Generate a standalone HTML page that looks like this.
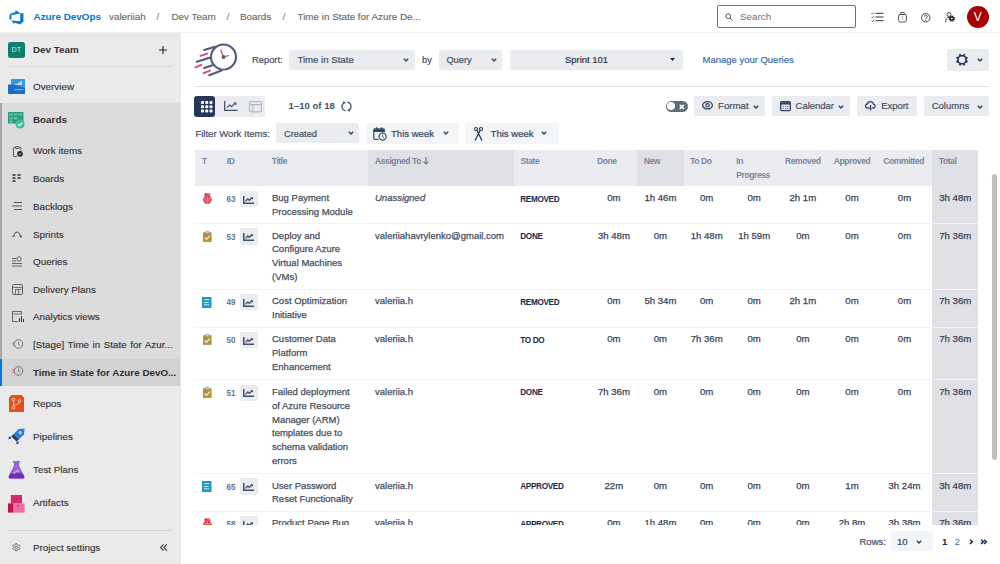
<!DOCTYPE html>
<html><head><meta charset="utf-8">
<style>
*{box-sizing:border-box;margin:0;padding:0}
html,body{width:1000px;height:564px;overflow:hidden;background:#fff;font-family:"Liberation Sans",sans-serif;color:#323130;position:relative}
.a{position:absolute}
.t{position:absolute;white-space:nowrap;line-height:14px}
svg{position:absolute;overflow:visible}
/* topbar */
#top{left:0;top:0;width:1000px;height:33px;background:#fff;border-bottom:1px solid #f0f0f0}
.crumb{font-size:9.85px;color:#6b6b6b;top:10px;-webkit-text-stroke-width:0.15px}
/* sidebar */
#side{left:0;top:33px;width:181px;height:531px;background:#eaeaea}
#boardsec{left:0;top:103px;width:180px;height:283px;background:#dcdcdc;border-left:2px solid #a8a8a8}
#sel{left:0;top:358.5px;width:180px;height:27.5px;background:#d2d2d2;border-left:2px solid #0078d4}
.nav{font-size:9.85px;color:#303030;left:33px;-webkit-text-stroke-width:0.12px}
.navb{font-weight:bold;-webkit-text-stroke-width:0}
/* main */
.btn{position:absolute;background:#ebecf0;border-radius:2px}
.lbl{font-size:9.6px;color:#444e62;-webkit-text-stroke-width:0.2px}
.th{font-size:8.6px;color:#7a869a;font-weight:bold;top:153.5px;letter-spacing:-0.45px}
.cell{font-size:9.5px;color:#454f62;line-height:13.9px;-webkit-text-stroke-width:0.25px}
.num{font-size:9.6px;color:#3b4457;text-align:center;width:46px;-webkit-text-stroke-width:0.25px}
.st{font-size:8.2px;font-weight:bold;color:#172b4d;left:520.3px;letter-spacing:-0.35px;margin-top:1.7px}
.hr{position:absolute;left:195px;width:783px;height:1px;background:#f4f5f7}
.idn{font-size:8.2px;font-weight:bold;color:#6b778c}
.cbtn{position:absolute;left:240px;width:17.6px;height:16.2px;background:#ebecf0;border-radius:2px}
</style></head><body>

<!-- TOP BAR -->
<div id="top" class="a"></div>
<svg style="left:9px;top:9.5px" width="15.3" height="14.5" viewBox="0 0 18 17">
 <path d="M17 3.5v10.2l-4.2 3.3-6.5-2.4v2.4L2.6 12.3l10.6.8V4.2zM13.5 4L7.6 0v2.4L2.1 4.1.5 6.1v4.6l2.3 1.1V5.8z" fill="#0078d4"/>
</svg>
<div class="t" style="left:33.5px;top:10px;font-size:9.9px;font-weight:bold;color:#0078d4">Azure DevOps</div>
<div class="t crumb" style="left:109px">valeriiah</div>
<div class="t crumb" style="left:156.5px;color:#8a8a8a">/</div>
<div class="t crumb" style="left:171.5px">Dev Team</div>
<div class="t crumb" style="left:226.5px;color:#8a8a8a">/</div>
<div class="t crumb" style="left:240px">Boards</div>
<div class="t crumb" style="left:282.5px;color:#8a8a8a">/</div>
<div class="t crumb" style="left:297.5px">Time in State for Azure De...</div>

<div class="a" style="left:716.5px;top:5px;width:139px;height:23px;border:1px solid #707070;border-radius:2px;background:#fff"></div>
<svg style="left:725px;top:12.5px" width="8" height="8" viewBox="0 0 8 8"><circle cx="3.2" cy="3.2" r="2.4" fill="none" stroke="#444" stroke-width="0.9"/><path d="M5 5L7.4 7.4" stroke="#444" stroke-width="1"/></svg>
<div class="t" style="left:740px;top:10px;font-size:9.85px;color:#707070">Search</div>

<svg style="left:871px;top:12px" width="12.5" height="10" viewBox="0 0 12.5 10"><path d="M0.5 1.3l0.9 0.9 1.6-1.7M0.5 5l0.9 0.9 1.6-1.7M0.5 8.7l0.9 0.9 1.6-1.7" fill="none" stroke="#333" stroke-width="0.8"/><path d="M4.5 1.3h8M4.5 5h8M4.5 8.7h8" stroke="#333" stroke-width="1"/></svg>
<svg style="left:897.5px;top:11.5px" width="9" height="10.5" viewBox="0 0 9 10.5"><path d="M2.8 0.5h3.4v2H2.8z" fill="none" stroke="#444" stroke-width="0.9"/><rect x="0.6" y="2.5" width="7.8" height="7.5" rx="1.5" fill="none" stroke="#444" stroke-width="0.9"/><path d="M4.5 4v4" stroke="#999" stroke-width="0.7"/></svg>
<svg style="left:921px;top:12.5px" width="9.5" height="9.5" viewBox="0 0 9.5 9.5"><circle cx="4.75" cy="4.75" r="4.2" fill="none" stroke="#333" stroke-width="0.9"/><path d="M3.4 3.6a1.4 1.4 0 1 1 1.9 1.3c-.4.2-.55.5-.55.9v.3" fill="none" stroke="#333" stroke-width="0.9"/><circle cx="4.75" cy="7.2" r="0.55" fill="#333"/></svg>
<svg style="left:944.5px;top:11.5px" width="11" height="11" viewBox="0 0 11 11"><circle cx="4" cy="2.5" r="2" fill="none" stroke="#333" stroke-width="0.9"/><path d="M0.6 10.3C0.6 7 2.2 5.4 4.2 5.4" fill="none" stroke="#333" stroke-width="0.9"/><path fill-rule="evenodd" d="M7.24 4.14 L7.51 3.38 L8.58 3.82 L8.23 4.55 L8.85 5.17 L9.58 4.82 L10.02 5.89 L9.26 6.16 L9.26 7.04 L10.02 7.31 L9.58 8.38 L8.85 8.03 L8.23 8.65 L8.58 9.38 L7.51 9.82 L7.24 9.06 L6.36 9.06 L6.09 9.82 L5.02 9.38 L5.37 8.65 L4.75 8.03 L4.02 8.38 L3.58 7.31 L4.34 7.04 L4.34 6.16 L3.58 5.89 L4.02 4.82 L4.75 5.17 L5.37 4.55 L5.02 3.82 L6.09 3.38 L6.36 4.14ZM7.70 6.60A0.9 0.9 0 1 0 5.90 6.60A0.9 0.9 0 1 0 7.70 6.60Z" fill="#222"/></svg>
<div class="a" style="left:966.8px;top:5.8px;width:22px;height:22px;border-radius:50%;background:#a80000"></div>
<div class="t" style="left:966.8px;top:9.5px;width:22px;text-align:center;font-size:12px;color:#fff">V</div>

<!-- SIDEBAR -->
<div id="side" class="a"></div>
<div id="boardsec" class="a"></div>
<div id="sel" class="a"></div>

<!-- DT -->
<div class="a" style="left:8px;top:42px;width:16.5px;height:16px;background:#0f806b;border-radius:2.5px"></div>
<div class="t" style="left:8px;top:43px;width:16.5px;text-align:center;font-size:7.2px;color:#cfe9e2">DT</div>
<div class="t nav navb" style="top:43px">Dev Team</div>
<svg style="left:159px;top:45.5px" width="8" height="8" viewBox="0 0 8 8"><path d="M4 0v8M0 4h8" stroke="#222" stroke-width="1.1"/></svg>
<div class="a" style="left:8px;top:66px;width:165px;height:1px;background:#dadada"></div>
<!-- Overview icon -->
<svg style="left:8px;top:79px" width="17" height="15" viewBox="0 0 17 15">
 <rect x="3" y="0" width="14" height="15" rx="0.8" fill="#3a96dd"/>
 <path d="M0 5.5h6L17 9v6H0.8a.8.8 0 0 1-.8-.8z" fill="#1e6ec8"/>
 <path d="M5.5 6l4-1.5 2-1.5 2.5-1.5V6z" fill="#a9dcf5"/>
 <path d="M6.5 10h9v1.2h-9z" fill="#6fb6ec"/>
 <path d="M3 13L5 11" stroke="#114d96" stroke-width="0.8"/>
</svg>
<div class="t nav" style="top:80px">Overview</div>
<!-- Boards icon -->
<svg style="left:8px;top:111.5px" width="17" height="17" viewBox="0 0 17 17">
 <rect x="0" y="0" width="15.5" height="11.5" rx="0.6" fill="#2a9d7c"/>
 <path d="M1.2 1.2h3.6v2.6H1.2zM5.8 1.2h3.6v2.6H5.8zM10.4 1.2h3.8v2.6h-3.8zM1.2 5h3.6v2.6H1.2zM5.8 5h3.6v2.6H5.8zM1.2 8.6h3.6v2.2H1.2z" fill="#56c0a2"/>
 <circle cx="12" cy="12" r="4.6" fill="#3fbf97"/>
 <path d="M9.8 12.1l1.6 1.6 2.9-3.1" fill="none" stroke="#fff" stroke-width="1.2"/>
</svg>
<div class="t nav navb" style="top:113px">Boards</div>
<!-- sub items -->
<svg style="left:12.5px;top:146px" width="10" height="11" viewBox="0 0 10 11"><path d="M2.6 1.5H1.2a.7.7 0 0 0-.7.7v7.6a.7.7 0 0 0 .7.7h2.6M6 1.5h1.2a.7.7 0 0 1 .7.7v2.3" fill="none" stroke="#444" stroke-width="0.9"/><rect x="2.6" y="0.5" width="3.4" height="2" rx="0.5" fill="none" stroke="#444" stroke-width="0.9"/><circle cx="7" cy="7.8" r="2.9" fill="#2a2a2a"/><path d="M5.8 7.8l.9.9 1.5-1.6" stroke="#fff" stroke-width="0.8" fill="none"/></svg>
<div class="t nav" style="top:144px">Work items</div>
<svg style="left:12px;top:173px" width="10" height="10" viewBox="0 0 10 10"><path d="M0.5 1h3v2h-3zM5.5 1h3v2h-3zM0.5 4h3v2h-3zM5.5 4h3v2h-3zM0.5 7h3v2h-3z" fill="#555"/></svg>
<div class="t nav" style="top:171.5px">Boards</div>
<svg style="left:12px;top:201px" width="10" height="10" viewBox="0 0 10 10"><path d="M2 1.5h8M0 5h10M2 8.5h8" stroke="#555" stroke-width="1"/></svg>
<div class="t nav" style="top:199.5px">Backlogs</div>
<svg style="left:12px;top:230px" width="10" height="8" viewBox="0 0 10 8"><path d="M0.3 6.3H2.2A2.9 4.2 0 0 1 8 6.3" fill="none" stroke="#444" stroke-width="1"/><circle cx="8.9" cy="6.6" r="1" fill="#444"/></svg>
<div class="t nav" style="top:227.5px">Sprints</div>
<svg style="left:12px;top:256px" width="11" height="11" viewBox="0 0 11 11"><path d="M0 2.5h4M0 5h4M0 7.5h10M0 10h10" stroke="#555" stroke-width="0.9"/><circle cx="7" cy="3" r="2.2" fill="none" stroke="#555" stroke-width="0.9"/></svg>
<div class="t nav" style="top:255px">Queries</div>
<svg style="left:12px;top:284px" width="11" height="11" viewBox="0 0 11 11"><rect x="0.5" y="0.5" width="10" height="10" rx="1.5" fill="none" stroke="#555" stroke-width="0.9"/><path d="M0.5 3.5h10M3.5 5.5h6M3.5 5.5v5M6.5 5.5v5" stroke="#555" stroke-width="0.8"/></svg>
<div class="t nav" style="top:282.5px">Delivery Plans</div>
<svg style="left:12px;top:311px" width="12" height="11" viewBox="0 0 12 11"><path d="M6 10.5H0.5V0.5h9v3" fill="none" stroke="#555" stroke-width="0.9"/><path d="M0.5 3h9" stroke="#555" stroke-width="0.8"/><path d="M7 7h1v4H7zM9 5h1v6H9zM11 8h1v3h-1z" fill="#333"/></svg>
<div class="t nav" style="top:310px">Analytics views</div>
<svg style="left:12px;top:339px" width="12" height="11" viewBox="0 0 12 11"><circle cx="6.5" cy="5" r="4.3" fill="none" stroke="#666" stroke-width="0.9"/><path d="M6.5 2.5v2.8l1.8 1" stroke="#666" stroke-width="0.8" fill="none"/><path d="M0 4h2.3M0.5 6.3h2" stroke="#d45a6e" stroke-width="0.9"/></svg>
<div class="t nav" style="top:338px;word-spacing:0.8px">[Stage] Time in State for Azur...</div>
<svg style="left:12px;top:366px" width="12" height="11" viewBox="0 0 12 11"><circle cx="6.5" cy="5" r="4.3" fill="none" stroke="#666" stroke-width="0.9"/><path d="M6.5 2.5v2.8l1.8 1" stroke="#666" stroke-width="0.8" fill="none"/><path d="M0 4h2.3M0.5 6.3h2" stroke="#d45a6e" stroke-width="0.9"/></svg>
<div class="t nav navb" style="top:365.5px">Time in State for Azure DevO...</div>
<!-- Repos -->
<svg style="left:8.5px;top:395px" width="15" height="17" viewBox="0 0 15 17">
 <path d="M0 2.5L2.5 0h10L15 2.5V17H0z" fill="#e4501b"/>
 <circle cx="4.5" cy="4.5" r="1.4" fill="none" stroke="#fbd3c3" stroke-width="0.9"/><circle cx="4.5" cy="12.5" r="1.4" fill="none" stroke="#fbd3c3" stroke-width="0.9"/><circle cx="10.5" cy="6" r="1.4" fill="none" stroke="#fbd3c3" stroke-width="0.9"/>
 <path d="M4.5 6v5M10.5 7.5c0 2-6 2-6 3.5" fill="none" stroke="#fbd3c3" stroke-width="0.9"/>
</svg>
<div class="t nav" style="top:396.5px">Repos</div>
<!-- Pipelines -->
<svg style="left:8px;top:427.5px" width="17" height="17" viewBox="0 0 17 17">
 <path d="M16.6 0.4L16 6.5 8.6 13.6 3.4 8.4 10.5 1z" fill="#2f7bd8"/>
 <path d="M3.4 8.4L0.8 8.8 0.4 11.2 2.8 11zM8.6 13.6l-.4 2.6 2.4-.4 0.2-2.4z" fill="#1d5fb8"/>
 <path d="M3.4 8.4l2.2-2.2 5.2 5.2-2.2 2.2z" fill="#3a4250"/>
 <circle cx="12.3" cy="4.7" r="1.6" fill="#a8d0f4"/>
 <path d="M3.6 12.2L1 16l3.8-2.6z" fill="#c6def5"/>
</svg>
<div class="t nav" style="top:430px">Pipelines</div>
<!-- Test plans -->
<svg style="left:8px;top:460.5px" width="17" height="18" viewBox="0 0 17 18">
 <path d="M5 0h7v1.4h-0.8v3.6L16.5 15.8 15.6 17.6H1.4L0.5 15.8 5.8 5V1.4H5z" fill="#9a62d9"/>
 <path d="M2.6 12.2h11.8L16.5 15.8 15.6 17.6H1.4L0.5 15.8z" fill="#6b30b8"/>
 <path d="M5.5 12.5l4.2-3.2 1.2 1.4" stroke="#e8a9d6" stroke-width="1.1" fill="none"/>
</svg>
<div class="t nav" style="top:463px">Test Plans</div>
<!-- Artifacts -->
<svg style="left:8px;top:494.5px" width="17" height="18" viewBox="0 0 17 18">
 <rect x="2.8" y="0" width="11.2" height="8.6" fill="#d42a6a"/>
 <rect x="0" y="8.4" width="5.6" height="9.2" fill="#b8174f"/>
 <rect x="5.6" y="8.4" width="11" height="9.2" fill="#ec6fa6"/>
 <rect x="9.5" y="10" width="1.6" height="1.6" fill="#c43a2a"/>
</svg>
<div class="t nav" style="top:496px">Artifacts</div>
<div class="a" style="left:8px;top:530px;width:165px;height:1px;background:#d6d6d6"></div>
<svg style="left:11.8px;top:543px" width="8.6" height="8.6" viewBox="0 0 11 11"><circle cx="5.5" cy="5.5" r="1.6" fill="none" stroke="#444" stroke-width="0.9"/><path d="M4.6 0.8h1.8l.3 1.4 1.2.6 1.3-.6 1 1.5-1 1v1.4l1 1-1 1.5-1.3-.6-1.2.6-.3 1.4H4.6l-.3-1.4-1.2-.6-1.3.6-1-1.5 1-1V4.7l-1-1 1-1.5 1.3.6 1.2-.6z" fill="none" stroke="#444" stroke-width="0.85"/></svg>
<div class="t nav" style="top:541px">Project settings</div>
<svg style="left:160px;top:544px" width="7.5" height="7" viewBox="0 0 7.5 7"><path d="M3.6 0.4L0.6 3.5 3.6 6.6M6.9 0.4L3.9 3.5 6.9 6.6" fill="none" stroke="#444" stroke-width="1.2"/></svg>

<!-- MAIN -->
<!-- logo -->
<svg style="left:193px;top:42px" width="46" height="36" viewBox="193 42 46 36">
 <g stroke="#4f5b7c" stroke-width="2.1" stroke-linecap="round" fill="none">
  <circle cx="223.5" cy="57" r="12.5"/>
  <path d="M204.2 49.9L215 46.8M196.8 61.8L210.5 57.6M204.2 68.1L212.5 65.3M209.3 75.2L221.5 70.6"/>
 </g>
 <path d="M214 62.5a10.5 10.5 0 0 0 12 5.5" stroke="#dcdee4" stroke-width="1" fill="none"/>
 <g stroke="#e2457d" stroke-width="1.9" stroke-linecap="round">
  <path d="M200.5 55.8L207.3 53.6M195.4 67.3L201.4 64.8M203.5 73.2L210 70.7"/>
 </g>
 <path d="M223.3 57L220.8 50M223.3 57L228.3 55.6" stroke="#e2457d" stroke-width="1.2" stroke-linecap="round"/>
 <circle cx="223.5" cy="57" r="1.9" fill="#4f5b7c"/>
</svg>
<div class="t lbl" style="left:252px;top:52.5px;font-size:9.35px">Report:</div>
<div class="btn" style="left:289.4px;top:49.5px;width:125.2px;height:20.5px"></div>
<div class="t lbl" style="left:297.4px;top:52.5px;font-size:9.65px">Time in State</div>
<svg style="left:402.5px;top:57.5px" width="6" height="4" viewBox="0 0 6 4"><path d="M0.8 0.8L3 3 5.2 0.8" fill="none" stroke="#344563" stroke-width="1.5"/></svg>
<div class="t lbl" style="left:422px;top:52.5px;font-size:9.35px">by</div>
<div class="btn" style="left:439px;top:49.5px;width:63.4px;height:20.5px"></div>
<div class="t lbl" style="left:446.4px;top:52.5px;font-size:9.3px">Query</div>
<svg style="left:490.5px;top:57.5px" width="6" height="4" viewBox="0 0 6 4"><path d="M0.8 0.8L3 3 5.2 0.8" fill="none" stroke="#344563" stroke-width="1.5"/></svg>
<div class="btn" style="left:509.6px;top:49.5px;width:173.4px;height:20.5px"></div>
<div class="t lbl" style="left:565px;top:52.5px;font-size:9.45px;color:#2b3240">Sprint 101</div>
<svg style="left:670.3px;top:58.3px" width="5" height="3" viewBox="0 0 5 3"><path d="M0 0h5L2.5 3z" fill="#172b4d"/></svg>
<div class="t lbl" style="left:702.6px;top:52.5px;font-size:9.47px;color:#3d6cb0">Manage your Queries</div>
<div class="btn" style="left:947.2px;top:49px;width:41.6px;height:21.5px"></div>
<svg style="left:0;top:0" width="1000" height="80" viewBox="0 0 1000 80"><path fill-rule="evenodd" d="M962.92 54.89 L963.38 53.76 L965.23 54.52 L964.75 55.65 L966.05 56.95 L967.18 56.47 L967.94 58.32 L966.81 58.78 L966.81 60.62 L967.94 61.08 L967.18 62.93 L966.05 62.45 L964.75 63.75 L965.23 64.88 L963.38 65.64 L962.92 64.51 L961.08 64.51 L960.62 65.64 L958.77 64.88 L959.25 63.75 L957.95 62.45 L956.82 62.93 L956.06 61.08 L957.19 60.62 L957.19 58.78 L956.06 58.32 L956.82 56.47 L957.95 56.95 L959.25 55.65 L958.77 54.52 L960.62 53.76 L961.08 54.89ZM965.20 59.70A3.2 3.2 0 1 0 958.80 59.70A3.2 3.2 0 1 0 965.20 59.70Z" fill="#253858"/></svg>
<svg style="left:977.2px;top:58.3px" width="6" height="4" viewBox="0 0 6 4"><path d="M0.8 0.8L3 3 5.2 0.8" fill="none" stroke="#344563" stroke-width="1.5"/></svg>
<div class="a" style="left:195px;top:86px;width:794px;height:1px;background:#dfe1e6"></div>

<!-- toolbar -->
<div class="a" style="left:194.3px;top:96px;width:70.5px;height:20.7px;background:#ebecf0;border-radius:3px"></div>
<div class="a" style="left:194.3px;top:96px;width:21px;height:20.7px;background:#253858;border-radius:3px"></div>
<svg style="left:201px;top:100.5px" width="11.5" height="11.5" viewBox="0 0 11.5 11.5"><rect x="0" y="0" width="3" height="3" rx="0.9" fill="#fff"/><rect x="4.25" y="0" width="3" height="3" rx="0.9" fill="#fff"/><rect x="8.5" y="0" width="3" height="3" rx="0.9" fill="#fff"/><rect x="0" y="4.25" width="3" height="3" rx="0.9" fill="#fff"/><rect x="4.25" y="4.25" width="3" height="3" rx="0.9" fill="#fff"/><rect x="8.5" y="4.25" width="3" height="3" rx="0.9" fill="#fff"/><rect x="0" y="8.5" width="3" height="3" rx="0.9" fill="#fff"/><rect x="4.25" y="8.5" width="3" height="3" rx="0.9" fill="#fff"/><rect x="8.5" y="8.5" width="3" height="3" rx="0.9" fill="#fff"/></svg>
<svg style="left:224px;top:101px" width="14" height="10" viewBox="0 0 14 10"><path d="M0.7 0v9.3H13.6" fill="none" stroke="#42526e" stroke-width="1.3"/><path d="M3 6.6l2.6-2.6 1.9 1.6 3.2-3.2" fill="none" stroke="#42526e" stroke-width="1.2"/><path d="M9.2 1.6h3.2v3.2z" fill="#42526e"/></svg>
<svg style="left:248.7px;top:101px" width="13" height="11.5" viewBox="0 0 13 11.5"><rect x="0.6" y="0.6" width="11.8" height="10.3" rx="1" fill="none" stroke="#b3bac5" stroke-width="1.2"/><path d="M0.6 3.6h11.8M4 3.6v7.3" stroke="#b3bac5" stroke-width="1.2"/></svg>
<div class="t" style="left:288.6px;top:99px;font-size:9.57px;font-weight:bold;color:#42526e">1–10 of 18</div>
<svg style="left:340.5px;top:100.5px" width="11" height="11" viewBox="0 0 11 11"><path d="M3.2 1.8A4.3 4.3 0 0 0 4.5 9.8M7.8 9.2A4.3 4.3 0 0 0 6.5 1.2" fill="none" stroke="#42526e" stroke-width="1.2"/><path d="M2 0.2l2.8 1.2L2.4 3.6zM9 10.8L6.2 9.6 8.6 7.4z" fill="#42526e"/></svg>

<!-- toggle -->
<div class="a" style="left:665.6px;top:101px;width:22.4px;height:10.6px;background:#606b7e;border-radius:6px"></div>
<div class="a" style="left:667px;top:102.4px;width:7.8px;height:7.8px;background:#fff;border-radius:50%"></div>
<svg style="left:679px;top:103.6px" width="5.6" height="5.6" viewBox="0 0 5.6 5.6"><path d="M0.7 0.7l4.2 4.2M4.9 0.7L0.7 4.9" stroke="#fff" stroke-width="1.5"/></svg>

<div class="btn" style="left:694px;top:96px;width:70.6px;height:20px"></div>
<svg style="left:701.9px;top:101.3px" width="11" height="8.6" viewBox="0 0 11 8.6"><ellipse cx="5.5" cy="4.3" rx="4.85" ry="3.65" fill="none" stroke="#344563" stroke-width="1.3"/><circle cx="5.5" cy="4.3" r="1.7" fill="none" stroke="#344563" stroke-width="1.2"/></svg>
<div class="t lbl" style="left:718px;top:99px;font-size:9.66px">Format</div>
<svg style="left:752.5px;top:104.5px" width="6" height="4" viewBox="0 0 6 4"><path d="M0.8 0.8L3 3 5.2 0.8" fill="none" stroke="#344563" stroke-width="1.5"/></svg>

<div class="btn" style="left:771.6px;top:96px;width:78px;height:20px"></div>
<svg style="left:780px;top:100.6px" width="11" height="10.2" viewBox="0 0 11 10.2"><rect x="0.65" y="0.65" width="9.7" height="8.9" rx="1" fill="none" stroke="#344563" stroke-width="1.3"/><path d="M0.65 1.2h9.7v2.4H0.65z" fill="#344563"/><path d="M2.6 5h1.3v1.1H2.6zM4.85 5h1.3v1.1H4.85zM7.1 5h1.3v1.1H7.1zM2.6 7h1.3v1.1H2.6zM4.85 7h1.3v1.1H4.85zM7.1 7h1.3v1.1H7.1z" fill="#6b778c"/></svg>
<div class="t lbl" style="left:795.6px;top:99px;font-size:9.46px">Calendar</div>
<svg style="left:838px;top:104.5px" width="6" height="4" viewBox="0 0 6 4"><path d="M0.8 0.8L3 3 5.2 0.8" fill="none" stroke="#344563" stroke-width="1.5"/></svg>

<div class="btn" style="left:857.2px;top:96px;width:59.5px;height:20.3px"></div>
<svg style="left:865.3px;top:100.6px" width="11" height="9.5" viewBox="0 0 11 9.5"><path d="M3.8 7H2.6A2 2 0 0 1 2.3 3 3.2 3.2 0 0 1 8.5 3.1 2 2 0 0 1 8.6 7H7.2" fill="none" stroke="#344563" stroke-width="1.3"/><path d="M5.5 4v5.2" stroke="#344563" stroke-width="1.4"/><path d="M4.2 7.6l1.3 1.6 1.3-1.6z" fill="#344563"/></svg>
<div class="t lbl" style="left:881.2px;top:99px;font-size:9.45px">Export</div>

<div class="btn" style="left:924.2px;top:96px;width:65.2px;height:20.3px"></div>
<div class="t lbl" style="left:931.7px;top:99px;font-size:9.5px">Columns</div>
<svg style="left:977.3px;top:104.5px" width="6" height="4" viewBox="0 0 6 4"><path d="M0.8 0.8L3 3 5.2 0.8" fill="none" stroke="#344563" stroke-width="1.5"/></svg>

<!-- filter row -->
<div class="t lbl" style="left:195.4px;top:126.5px;font-size:9.56px">Filter Work Items:</div>
<div class="btn" style="left:276.4px;top:123.4px;width:83.1px;height:19.8px"></div>
<div class="t lbl" style="left:284px;top:126.5px;font-size:9.28px">Created</div>
<svg style="left:347.5px;top:131px" width="6" height="4" viewBox="0 0 6 4"><path d="M0.8 0.8L3 3 5.2 0.8" fill="none" stroke="#344563" stroke-width="1.5"/></svg>
<div class="btn" style="left:366.3px;top:123.2px;width:92.4px;height:20.4px;background:#f4f5f7"></div>
<svg style="left:373px;top:127px" width="14" height="14" viewBox="0 0 14 14"><path d="M5.5 12.3H1.8a1 1 0 0 1-1-1V3a1 1 0 0 1 1-1h8.6a1 1 0 0 1 1 1v2.3" fill="none" stroke="#42526e" stroke-width="1.3"/><path d="M0.8 2.2h10.6v2.8H0.8z" fill="#344563"/><path d="M3.5 0.2v3M8.7 0.2v3" stroke="#344563" stroke-width="1.3"/><circle cx="9.6" cy="9.6" r="3.5" fill="#f4f5f7" stroke="#42526e" stroke-width="1.3"/><path d="M9.6 7.8v2l1.3 0.9" fill="none" stroke="#42526e" stroke-width="1"/></svg>
<div class="t lbl" style="left:391px;top:126.5px;font-size:9.55px;color:#344563">This week</div>
<svg style="left:442.5px;top:131px" width="6" height="4" viewBox="0 0 6 4"><path d="M0.8 0.8L3 3 5.2 0.8" fill="none" stroke="#344563" stroke-width="1.5"/></svg>
<div class="btn" style="left:465.4px;top:123.2px;width:93.6px;height:20.4px;background:#f4f5f7"></div>
<svg style="left:474px;top:126.5px" width="9" height="14" viewBox="0 0 9 14"><circle cx="2" cy="2" r="1.5" fill="none" stroke="#253858" stroke-width="1.1"/><circle cx="7" cy="2" r="1.5" fill="none" stroke="#253858" stroke-width="1.1"/><path d="M2.8 3.2L8 13.5M6.2 3.2L1 13.5" stroke="#253858" stroke-width="1.3"/></svg>
<div class="t lbl" style="left:490.6px;top:126.5px;font-size:9.55px;color:#344563">This week</div>
<svg style="left:541.2px;top:131px" width="6" height="4" viewBox="0 0 6 4"><path d="M0.8 0.8L3 3 5.2 0.8" fill="none" stroke="#344563" stroke-width="1.5"/></svg>

<!-- table -->
<div id="tbl" class="a" style="left:0;top:0;width:1000px;height:524.5px;overflow:hidden">
<div class="a" style="left:195px;top:150px;width:783.3px;height:36.2px;background:#ebecf0"></div>
<div class="a" style="left:368px;top:150px;width:146px;height:36.2px;background:#dfe1e6"></div>
<div class="a" style="left:637.25px;top:150px;width:46.25px;height:36.2px;background:#dfe1e6"></div>
<div class="a" style="left:932.25px;top:150px;width:46px;height:380px;background:#dfe1e6"></div>
<div class="t th" style="left:201.75px">T</div>
<div class="t th" style="left:226.75px">ID</div>
<div class="t th" style="left:271.75px">Title</div>
<div class="t th" style="left:375px">Assigned To</div>
<svg style="left:423px;top:156.5px" width="6" height="8" viewBox="0 0 6 8"><path d="M3 0v7M0.6 4.6L3 7 5.4 4.6" fill="none" stroke="#6b778c" stroke-width="1.2"/></svg>
<div class="t th" style="left:520.5px">State</div>
<div class="t th" style="left:597px">Done</div>
<div class="t th" style="left:643.75px">New</div>
<div class="t th" style="left:690px">To Do</div>
<div class="t th" style="left:736.25px">In<br>Progress</div>
<div class="t th" style="left:785px">Removed</div>
<div class="t th" style="left:833.75px">Approved</div>
<div class="t th" style="left:883.25px">Committed</div>
<div class="t th" style="left:938.75px">Total</div>
<svg style="left:202.7px;top:192.8px" width="8.8" height="11" viewBox="0 0 8.8 11"><path d="M1.4 0.3h6v3.2h-6z" fill="#e0506a"/><circle cx="2.6" cy="1.4" r="0.7" fill="#555"/><circle cx="6.2" cy="1.4" r="0.7" fill="#f28ab8"/><ellipse cx="4.4" cy="6.8" rx="4.4" ry="4.1" fill="#dd3f3a"/><path d="M4.4 3v7.8M0.6 5.6h7.6M0.8 8.2h7.2" stroke="#f27bb6" stroke-width="0.9"/><circle cx="2.2" cy="6.9" r="0.6" fill="#f6a0c8"/><circle cx="6.6" cy="6.9" r="0.6" fill="#f6a0c8"/></svg>
<div class="t idn" style="left:226.5px;top:193.30px">63</div>
<div class="cbtn" style="top:191.2px"></div>
<svg style="left:243.2px;top:195.8px" width="11" height="8" viewBox="0 0 11 8"><path d="M0.75 0v7.25H11" fill="none" stroke="#42526e" stroke-width="1.5"/><path d="M2.6 5.4l2.2-2.4 1.6 1.4 2.6-2.6" fill="none" stroke="#42526e" stroke-width="1.4"/><path d="M7.4 1.2h2.6v2.6z" fill="#42526e"/></svg>
<div class="t cell" style="left:272px;top:191.30px">Bug Payment<br>Processing Module</div>
<div class="t cell" style="left:375px;top:191.30px;font-style:italic">Unassigned</div>
<div class="t st" style="top:191.30px">REMOVED</div>
<div class="t num" style="left:590.50px;width:46.75px;top:191.30px">0m</div>
<div class="t num" style="left:637.25px;width:46.25px;top:191.30px">1h 46m</div>
<div class="t num" style="left:683.50px;width:46.25px;top:191.30px">0m</div>
<div class="t num" style="left:729.75px;width:48.75px;top:191.30px">0m</div>
<div class="t num" style="left:778.50px;width:48.75px;top:191.30px">2h 1m</div>
<div class="t num" style="left:827.25px;width:49.50px;top:191.30px">0m</div>
<div class="t num" style="left:876.75px;width:55.50px;top:191.30px">0m</div>
<div class="t num" style="left:932.25px;width:46.00px;top:191.30px">3h 48m</div>
<div class="hr" style="top:222.9px"></div>
<svg style="left:202.8px;top:230.8px" width="8.6" height="11" viewBox="0 0 8.6 11"><rect x="0" y="1.2" width="8.6" height="9.8" rx="0.8" fill="#b5952a"/><path d="M0.4 1.6h7.8M0.4 10.6h7.8" stroke="#9aa3b5" stroke-width="0.7"/><rect x="2.6" y="0" width="3.4" height="2.4" rx="0.6" fill="#c9cfdc" stroke="#8e97a8" stroke-width="0.5"/><path d="M1.6 6.4l1.9 1.9 3.4-3.7" fill="none" stroke="#f4f0ea" stroke-width="1.2"/><path d="M2 3.8v2M3.8 3.8v1.4" stroke="#7d8698" stroke-width="0.6"/></svg>
<div class="t idn" style="left:226.5px;top:230.50px">53</div>
<div class="cbtn" style="top:228.4px"></div>
<svg style="left:243.2px;top:233.0px" width="11" height="8" viewBox="0 0 11 8"><path d="M0.75 0v7.25H11" fill="none" stroke="#42526e" stroke-width="1.5"/><path d="M2.6 5.4l2.2-2.4 1.6 1.4 2.6-2.6" fill="none" stroke="#42526e" stroke-width="1.4"/><path d="M7.4 1.2h2.6v2.6z" fill="#42526e"/></svg>
<div class="t cell" style="left:272px;top:228.50px">Deploy and<br>Configure Azure<br>Virtual Machines<br>(VMs)</div>
<div class="t cell" style="left:375px;top:228.50px">valeriiahavrylenko@gmail.com</div>
<div class="t st" style="top:228.50px">DONE</div>
<div class="t num" style="left:590.50px;width:46.75px;top:228.50px">3h 48m</div>
<div class="t num" style="left:637.25px;width:46.25px;top:228.50px">0m</div>
<div class="t num" style="left:683.50px;width:46.25px;top:228.50px">1h 48m</div>
<div class="t num" style="left:729.75px;width:48.75px;top:228.50px">1h 59m</div>
<div class="t num" style="left:778.50px;width:48.75px;top:228.50px">0m</div>
<div class="t num" style="left:827.25px;width:49.50px;top:228.50px">0m</div>
<div class="t num" style="left:876.75px;width:55.50px;top:228.50px">0m</div>
<div class="t num" style="left:932.25px;width:46.00px;top:228.50px">7h 36m</div>
<div class="hr" style="top:288.6px"></div>
<svg style="left:202.1px;top:297.0px" width="9.5" height="11" viewBox="0 0 9.5 11"><rect x="0" y="0" width="9.5" height="11" fill="#1a9bc7"/><path d="M2 2.7h5.2M2 5.5h4.6M2 7.8h5.2" stroke="#c9ecf6" stroke-width="1"/></svg>
<div class="t idn" style="left:226.5px;top:296.20px">49</div>
<div class="cbtn" style="top:294.1px"></div>
<svg style="left:243.2px;top:298.7px" width="11" height="8" viewBox="0 0 11 8"><path d="M0.75 0v7.25H11" fill="none" stroke="#42526e" stroke-width="1.5"/><path d="M2.6 5.4l2.2-2.4 1.6 1.4 2.6-2.6" fill="none" stroke="#42526e" stroke-width="1.4"/><path d="M7.4 1.2h2.6v2.6z" fill="#42526e"/></svg>
<div class="t cell" style="left:272px;top:294.20px">Cost Optimization<br>Initiative</div>
<div class="t cell" style="left:375px;top:294.20px">valeriia.h</div>
<div class="t st" style="top:294.20px">REMOVED</div>
<div class="t num" style="left:590.50px;width:46.75px;top:294.20px">0m</div>
<div class="t num" style="left:637.25px;width:46.25px;top:294.20px">5h 34m</div>
<div class="t num" style="left:683.50px;width:46.25px;top:294.20px">0m</div>
<div class="t num" style="left:729.75px;width:48.75px;top:294.20px">0m</div>
<div class="t num" style="left:778.50px;width:48.75px;top:294.20px">2h 1m</div>
<div class="t num" style="left:827.25px;width:49.50px;top:294.20px">0m</div>
<div class="t num" style="left:876.75px;width:55.50px;top:294.20px">0m</div>
<div class="t num" style="left:932.25px;width:46.00px;top:294.20px">7h 36m</div>
<div class="hr" style="top:326.5px"></div>
<svg style="left:202.8px;top:334.4px" width="8.6" height="11" viewBox="0 0 8.6 11"><rect x="0" y="1.2" width="8.6" height="9.8" rx="0.8" fill="#b5952a"/><path d="M0.4 1.6h7.8M0.4 10.6h7.8" stroke="#9aa3b5" stroke-width="0.7"/><rect x="2.6" y="0" width="3.4" height="2.4" rx="0.6" fill="#c9cfdc" stroke="#8e97a8" stroke-width="0.5"/><path d="M1.6 6.4l1.9 1.9 3.4-3.7" fill="none" stroke="#f4f0ea" stroke-width="1.2"/><path d="M2 3.8v2M3.8 3.8v1.4" stroke="#7d8698" stroke-width="0.6"/></svg>
<div class="t idn" style="left:226.5px;top:334.10px">50</div>
<div class="cbtn" style="top:332.0px"></div>
<svg style="left:243.2px;top:336.6px" width="11" height="8" viewBox="0 0 11 8"><path d="M0.75 0v7.25H11" fill="none" stroke="#42526e" stroke-width="1.5"/><path d="M2.6 5.4l2.2-2.4 1.6 1.4 2.6-2.6" fill="none" stroke="#42526e" stroke-width="1.4"/><path d="M7.4 1.2h2.6v2.6z" fill="#42526e"/></svg>
<div class="t cell" style="left:272px;top:332.10px">Customer Data<br>Platform<br>Enhancement</div>
<div class="t cell" style="left:375px;top:332.10px">valeriia.h</div>
<div class="t st" style="top:332.10px">TO DO</div>
<div class="t num" style="left:590.50px;width:46.75px;top:332.10px">0m</div>
<div class="t num" style="left:637.25px;width:46.25px;top:332.10px">0m</div>
<div class="t num" style="left:683.50px;width:46.25px;top:332.10px">7h 36m</div>
<div class="t num" style="left:729.75px;width:48.75px;top:332.10px">0m</div>
<div class="t num" style="left:778.50px;width:48.75px;top:332.10px">0m</div>
<div class="t num" style="left:827.25px;width:49.50px;top:332.10px">0m</div>
<div class="t num" style="left:876.75px;width:55.50px;top:332.10px">0m</div>
<div class="t num" style="left:932.25px;width:46.00px;top:332.10px">7h 36m</div>
<div class="hr" style="top:379.1px"></div>
<svg style="left:202.8px;top:387.0px" width="8.6" height="11" viewBox="0 0 8.6 11"><rect x="0" y="1.2" width="8.6" height="9.8" rx="0.8" fill="#b5952a"/><path d="M0.4 1.6h7.8M0.4 10.6h7.8" stroke="#9aa3b5" stroke-width="0.7"/><rect x="2.6" y="0" width="3.4" height="2.4" rx="0.6" fill="#c9cfdc" stroke="#8e97a8" stroke-width="0.5"/><path d="M1.6 6.4l1.9 1.9 3.4-3.7" fill="none" stroke="#f4f0ea" stroke-width="1.2"/><path d="M2 3.8v2M3.8 3.8v1.4" stroke="#7d8698" stroke-width="0.6"/></svg>
<div class="t idn" style="left:226.5px;top:386.70px">51</div>
<div class="cbtn" style="top:384.6px"></div>
<svg style="left:243.2px;top:389.2px" width="11" height="8" viewBox="0 0 11 8"><path d="M0.75 0v7.25H11" fill="none" stroke="#42526e" stroke-width="1.5"/><path d="M2.6 5.4l2.2-2.4 1.6 1.4 2.6-2.6" fill="none" stroke="#42526e" stroke-width="1.4"/><path d="M7.4 1.2h2.6v2.6z" fill="#42526e"/></svg>
<div class="t cell" style="left:272px;top:384.70px">Failed deployment<br>of Azure Resource<br>Manager (ARM)<br>templates due to<br>schema validation<br>errors</div>
<div class="t cell" style="left:375px;top:384.70px">valeriia.h</div>
<div class="t st" style="top:384.70px">DONE</div>
<div class="t num" style="left:590.50px;width:46.75px;top:384.70px">7h 36m</div>
<div class="t num" style="left:637.25px;width:46.25px;top:384.70px">0m</div>
<div class="t num" style="left:683.50px;width:46.25px;top:384.70px">0m</div>
<div class="t num" style="left:729.75px;width:48.75px;top:384.70px">0m</div>
<div class="t num" style="left:778.50px;width:48.75px;top:384.70px">0m</div>
<div class="t num" style="left:827.25px;width:49.50px;top:384.70px">0m</div>
<div class="t num" style="left:876.75px;width:55.50px;top:384.70px">0m</div>
<div class="t num" style="left:932.25px;width:46.00px;top:384.70px">7h 36m</div>
<div class="hr" style="top:472.9px"></div>
<svg style="left:202.1px;top:481.3px" width="9.5" height="11" viewBox="0 0 9.5 11"><rect x="0" y="0" width="9.5" height="11" fill="#1a9bc7"/><path d="M2 2.7h5.2M2 5.5h4.6M2 7.8h5.2" stroke="#c9ecf6" stroke-width="1"/></svg>
<div class="t idn" style="left:226.5px;top:480.50px">65</div>
<div class="cbtn" style="top:478.4px"></div>
<svg style="left:243.2px;top:483.0px" width="11" height="8" viewBox="0 0 11 8"><path d="M0.75 0v7.25H11" fill="none" stroke="#42526e" stroke-width="1.5"/><path d="M2.6 5.4l2.2-2.4 1.6 1.4 2.6-2.6" fill="none" stroke="#42526e" stroke-width="1.4"/><path d="M7.4 1.2h2.6v2.6z" fill="#42526e"/></svg>
<div class="t cell" style="left:272px;top:478.50px">User Password<br>Reset Functionality</div>
<div class="t cell" style="left:375px;top:478.50px">valeriia.h</div>
<div class="t st" style="top:478.50px">APPROVED</div>
<div class="t num" style="left:590.50px;width:46.75px;top:478.50px">22m</div>
<div class="t num" style="left:637.25px;width:46.25px;top:478.50px">0m</div>
<div class="t num" style="left:683.50px;width:46.25px;top:478.50px">0m</div>
<div class="t num" style="left:729.75px;width:48.75px;top:478.50px">0m</div>
<div class="t num" style="left:778.50px;width:48.75px;top:478.50px">0m</div>
<div class="t num" style="left:827.25px;width:49.50px;top:478.50px">1m</div>
<div class="t num" style="left:876.75px;width:55.50px;top:478.50px">3h 24m</div>
<div class="t num" style="left:932.25px;width:46.00px;top:478.50px">3h 48m</div>
<div class="hr" style="top:510.7px"></div>
<svg style="left:202.7px;top:517.8px" width="8.8" height="11" viewBox="0 0 8.8 11"><path d="M1.4 0.3h6v3.2h-6z" fill="#e0506a"/><circle cx="2.6" cy="1.4" r="0.7" fill="#555"/><circle cx="6.2" cy="1.4" r="0.7" fill="#f28ab8"/><ellipse cx="4.4" cy="6.8" rx="4.4" ry="4.1" fill="#dd3f3a"/><path d="M4.4 3v7.8M0.6 5.6h7.6M0.8 8.2h7.2" stroke="#f27bb6" stroke-width="0.9"/><circle cx="2.2" cy="6.9" r="0.6" fill="#f6a0c8"/><circle cx="6.6" cy="6.9" r="0.6" fill="#f6a0c8"/></svg>
<div class="t idn" style="left:226.5px;top:518.30px">58</div>
<div class="cbtn" style="top:516.2px"></div>
<svg style="left:243.2px;top:520.8px" width="11" height="8" viewBox="0 0 11 8"><path d="M0.75 0v7.25H11" fill="none" stroke="#42526e" stroke-width="1.5"/><path d="M2.6 5.4l2.2-2.4 1.6 1.4 2.6-2.6" fill="none" stroke="#42526e" stroke-width="1.4"/><path d="M7.4 1.2h2.6v2.6z" fill="#42526e"/></svg>
<div class="t cell" style="left:272px;top:516.30px">Product Page Bug</div>
<div class="t cell" style="left:375px;top:516.30px">valeriia.h</div>
<div class="t st" style="top:516.30px">APPROVED</div>
<div class="t num" style="left:590.50px;width:46.75px;top:516.30px">0m</div>
<div class="t num" style="left:637.25px;width:46.25px;top:516.30px">1h 48m</div>
<div class="t num" style="left:683.50px;width:46.25px;top:516.30px">0m</div>
<div class="t num" style="left:729.75px;width:48.75px;top:516.30px">0m</div>
<div class="t num" style="left:778.50px;width:48.75px;top:516.30px">0m</div>
<div class="t num" style="left:827.25px;width:49.50px;top:516.30px">2h 8m</div>
<div class="t num" style="left:876.75px;width:55.50px;top:516.30px">3h 38m</div>
<div class="t num" style="left:932.25px;width:46.00px;top:516.30px">7h 36m</div>
</div>
<div class="a" style="left:992px;top:173.8px;width:5px;height:286.5px;background:#c1c1c1;border-radius:3px"></div>

<!-- pagination -->
<div class="t lbl" style="left:859.5px;top:535px;font-size:9.5px">Rows:</div>
<div class="btn" style="left:891.2px;top:531.2px;width:41.6px;height:20.3px;background:#f4f5f7"></div>
<div class="t lbl" style="left:897px;top:535px;font-size:9.5px;color:#344563">10</div>
<svg style="left:916px;top:540px" width="6" height="4" viewBox="0 0 6 4"><path d="M0.8 0.8L3 3 5.2 0.8" fill="none" stroke="#344563" stroke-width="1.5"/></svg>
<div class="t" style="left:942px;top:535px;font-size:9.6px;font-weight:bold;color:#222b38">1</div>
<div class="t" style="left:954.6px;top:535px;font-size:9.8px;color:#4a6da8">2</div>
<svg style="left:969px;top:539px" width="4.5" height="5.6" viewBox="0 0 4.5 5.6"><path d="M0.9 0.7L3.3 2.8 0.9 4.9" fill="none" stroke="#172b4d" stroke-width="1.5"/></svg>
<svg style="left:980.4px;top:539px" width="7.5" height="5.6" viewBox="0 0 7.5 5.6"><path d="M0.9 0.7L3.3 2.8 0.9 4.9M4 0.7L6.4 2.8 4 4.9" fill="none" stroke="#172b4d" stroke-width="1.5"/></svg>

</body></html>
